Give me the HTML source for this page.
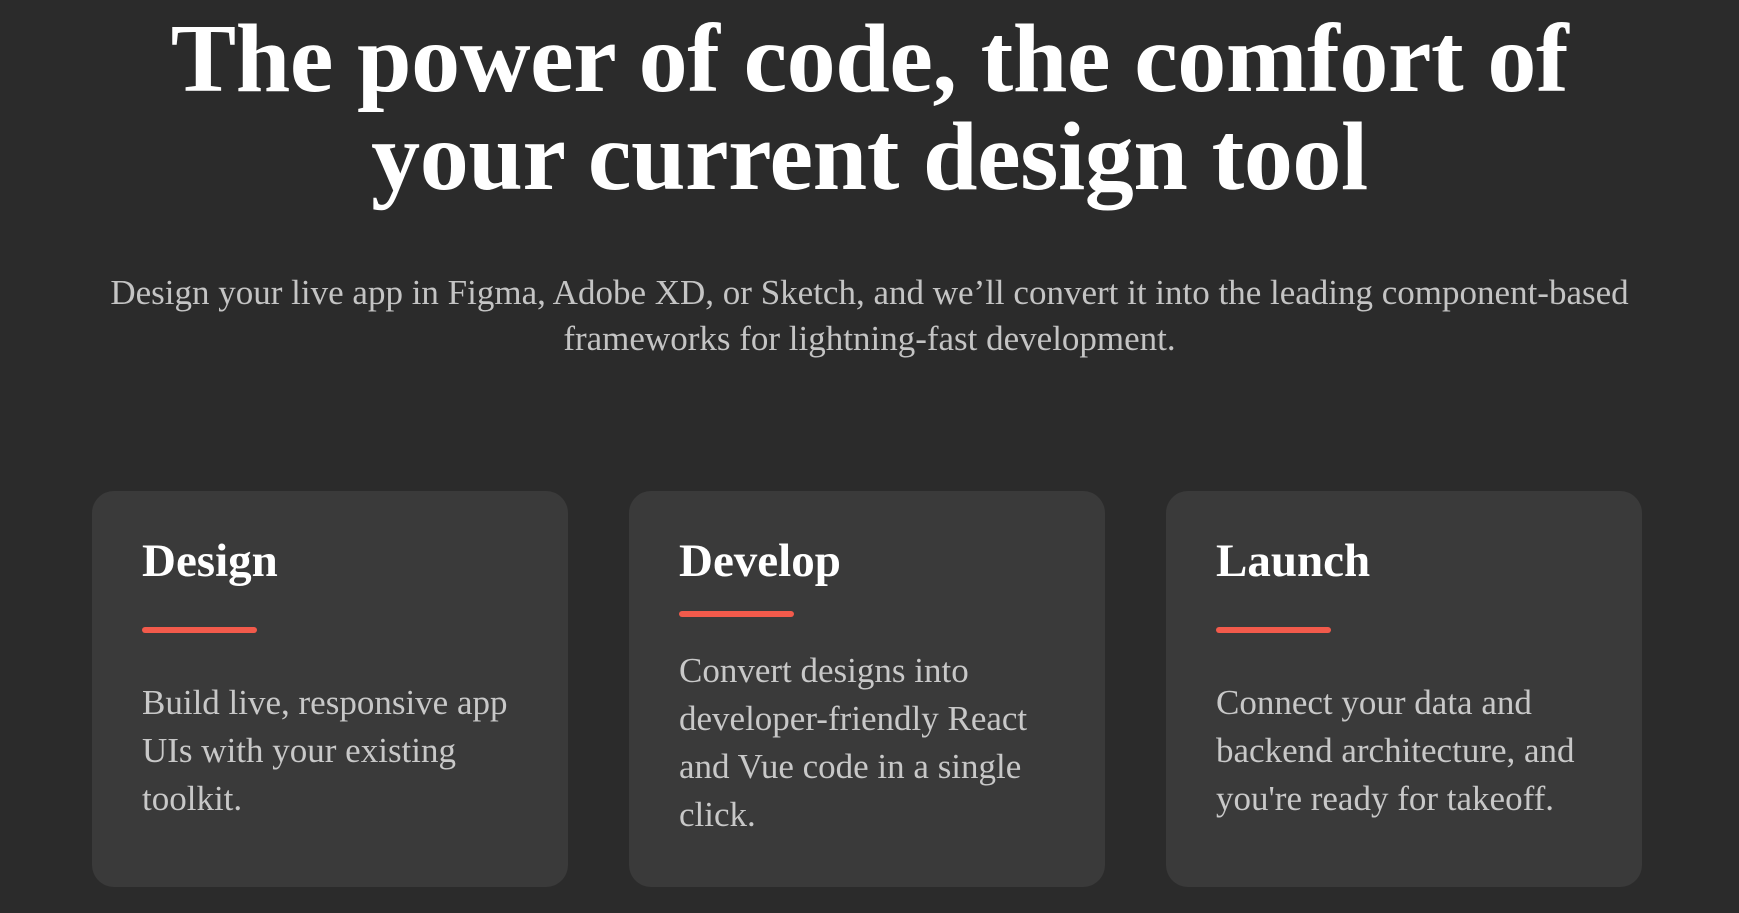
<!DOCTYPE html>
<html><head><meta charset="utf-8"><style>
html,body{margin:0;padding:0;}
body{width:1739px;height:913px;background:#2b2b2b;overflow:hidden;font-family:"Liberation Serif",serif;position:relative;}
h1{position:absolute;top:10px;left:0;width:1739px;margin:0;text-align:center;color:#fff;font-size:98px;line-height:98px;font-weight:700;letter-spacing:-0.4px;}
.sub{position:absolute;top:270px;left:0;width:1739px;margin:0;text-align:center;color:#c4c4c4;font-size:35px;line-height:46px;}
.card{position:absolute;top:491px;width:476px;height:396px;background:#3a3a3a;border-radius:22px;}
.card h2{position:absolute;left:50px;top:43px;margin:0;color:#fff;font-size:47px;line-height:54px;font-weight:700;}
.bar{position:absolute;left:50px;top:136px;width:115px;height:6px;border-radius:3px;background:#f25a4b;}
.card p{position:absolute;left:50px;top:188px;margin:0;color:#c8c8c8;font-size:35px;line-height:48px;white-space:nowrap;}
.dev .bar{top:120px}
.dev p{top:156px}
</style></head><body>
<h1>The power of code, the comfort of<br>your current design tool</h1>
<p class="sub">Design your live app in Figma, Adobe XD, or Sketch, and we’ll convert it into the leading component-based<br>frameworks for lightning-fast development.</p>
<div class="card" style="left:92px"><h2>Design</h2><div class="bar"></div><p>Build live, responsive app<br>UIs with your existing<br>toolkit.</p></div>
<div class="card dev" style="left:629px"><h2>Develop</h2><div class="bar"></div><p>Convert designs into<br>developer-friendly React<br>and Vue code in a single<br>click.</p></div>
<div class="card" style="left:1166px"><h2>Launch</h2><div class="bar"></div><p>Connect your data and<br>backend architecture, and<br>you're ready for takeoff.</p></div>
</body></html>
